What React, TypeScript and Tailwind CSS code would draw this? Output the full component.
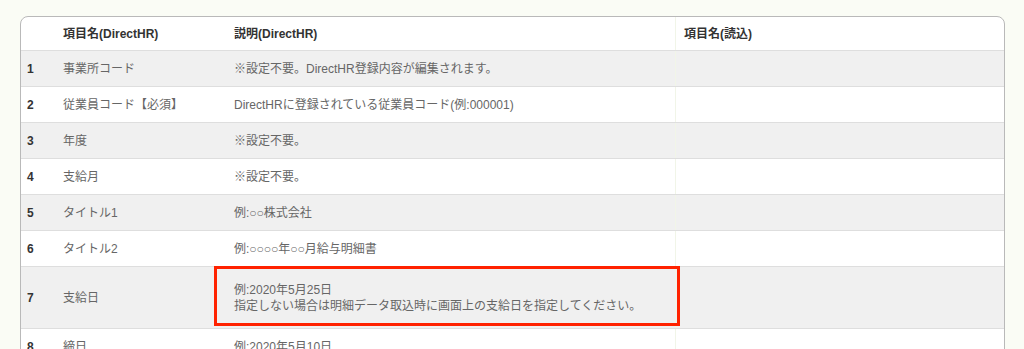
import React from "react";

type Row = { no: string; name: string; desc: string[]; h: string; gray: boolean };

const rows: Row[] = [
  { no: "1", name: "事業所コード", desc: ["※設定不要。DirectHR登録内容が編集されます。"], h: "h-[36px]", gray: true },
  { no: "2", name: "従業員コード【必須】", desc: ["DirectHRに登録されている従業員コード(例:000001)"], h: "h-[36px]", gray: false },
  { no: "3", name: "年度", desc: ["※設定不要。"], h: "h-[36px]", gray: true },
  { no: "4", name: "支給月", desc: ["※設定不要。"], h: "h-[36px]", gray: false },
  { no: "5", name: "タイトル1", desc: ["例:○○株式会社"], h: "h-[36px]", gray: true },
  { no: "6", name: "タイトル2", desc: ["例:○○○○年○○月給与明細書"], h: "h-[36px]", gray: false },
  {
    no: "7",
    name: "支給日",
    desc: ["例:2020年5月25日", "指定しない場合は明細データ取込時に画面上の支給日を指定してください。"],
    h: "h-[62px]",
    gray: true,
  },
  { no: "8", name: "締日", desc: ["例:2020年5月10日"], h: "h-[36px]", gray: false },
  { no: "9", name: "タイトル3", desc: ["例:○○○○"], h: "h-[36px]", gray: true },
];

export default function App() {
  return (
    <div
      className="h-[349px] w-[1024px] overflow-hidden bg-[#fafcf5] pt-4 pl-5"
      style={{ fontFamily: '"Liberation Sans", "Noto Sans CJK JP", sans-serif' }}
    >
      <div className="relative w-[985px] overflow-hidden rounded-lg border border-[#b9b9b9] bg-white text-[12px]">
        <div className="flex h-[34px] items-center border-b border-[#dedede] font-bold text-[#333]">
          <div className="w-[35px] shrink-0 pl-[6px]"></div>
          <div className="w-[171px] shrink-0 pl-[7px]">項目名(DirectHR)</div>
          <div className="w-[448px] shrink-0 pl-[7px]">説明(DirectHR)</div>
          <div className="flex h-full flex-1 items-center border-l border-[#f1f5e8] pl-[8px]">項目名(読込)</div>
        </div>
        {rows.map((r) => (
          <div
            key={r.no}
            className={`relative flex ${r.h} items-center border-b border-[#dedede] ${r.gray ? "bg-[#f0f0f0]" : "bg-white"}`}
          >
            <div className="w-[35px] shrink-0 pl-[6px] font-bold text-[#333]">{r.no}</div>
            <div className="w-[171px] shrink-0 pl-[7px] text-[#666]">{r.name}</div>
            <div className="flex w-[448px] shrink-0 flex-col pl-[7px] leading-[16px] text-[#666]">
              {r.desc.map((d, i) => (
                <span key={i}>{d}</span>
              ))}
            </div>
            <div className="h-full flex-1 border-l border-[#f1f5e8]"></div>
            {r.no === "7" && (
              <div className="pointer-events-none absolute top-[-1px] left-[193px] h-[60px] w-[466px] border-[3px] border-[#ff2200]"></div>
            )}
          </div>
        ))}
      </div>
    </div>
  );
}
